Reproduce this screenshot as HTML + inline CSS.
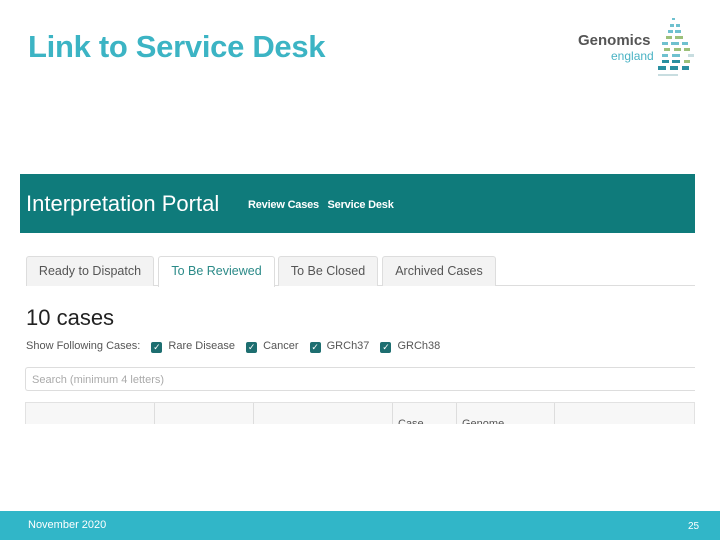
<!DOCTYPE html>
<html><head><meta charset="utf-8"><style>
*{margin:0;padding:0;box-sizing:border-box}
body{width:720px;height:540px;background:#fff;position:relative;overflow:hidden;font-family:"Liberation Sans",Arial,sans-serif}
.a{position:absolute}
.title{left:28px;top:29px;font-size:31px;font-weight:bold;color:#3cb4c4;font-family:"Liberation Sans",sans-serif;letter-spacing:-0.3px}
.hdr{left:20px;top:174px;width:675px;height:59px;background:#0f7b7b}
.tab{position:absolute;top:256px;height:30px;border:1px solid #ddd;border-bottom:none;background:#f3f3f3;border-radius:3px 3px 0 0;font-size:12.5px;color:#555;text-align:center;line-height:29px}
.cb{display:inline-block;width:11px;height:11px;background:#1d6e70;border-radius:2px;vertical-align:-1px;margin:0 6px 0 8px;color:#fff;font-size:9px;line-height:11px;text-align:center}
</style></head><body>
<div class="a title">Link to Service Desk</div>
<div class="a" style="left:578px;top:32px;font-size:15px;font-weight:bold;color:#555">Genomics</div>
<div class="a" style="left:611px;top:49px;font-size:12px;color:#4ab3c4">england</div>
<svg class="a" style="left:658px;top:16px" width="40" height="62">
<g fill="#6fc1cf"><rect x="14" y="2" width="3" height="2"/><rect x="12" y="8" width="4" height="3"/><rect x="18" y="8" width="4" height="3"/><rect x="10" y="14" width="5" height="3"/><rect x="17" y="14" width="6" height="3"/><rect x="4" y="26" width="6" height="3"/><rect x="13" y="26" width="8" height="3"/><rect x="24" y="26" width="6" height="3"/><rect x="4" y="38" width="6" height="3"/><rect x="14" y="38" width="8" height="3"/></g>
<g fill="#9cc07a"><rect x="8" y="20" width="6" height="3"/><rect x="17" y="20" width="8" height="3"/><rect x="6" y="32" width="6" height="3"/><rect x="16" y="32" width="7" height="3"/><rect x="26" y="32" width="6" height="3"/><rect x="26" y="44" width="6" height="3"/></g>
<g fill="#2a8fa0"><rect x="4" y="44" width="7" height="3"/><rect x="14" y="44" width="8" height="3"/><rect x="0" y="50" width="8" height="4"/><rect x="12" y="50" width="8" height="4"/><rect x="24" y="50" width="7" height="4"/></g>
<g fill="#c8dde0"><rect x="0" y="58" width="20" height="2"/><rect x="30" y="38" width="6" height="3"/></g>
</svg>
<div class="a hdr"></div>
<div class="a" style="left:26px;top:191px;font-size:22px;color:#fff">Interpretation Portal</div>
<div class="a" style="left:248px;top:199px;font-size:11px;color:#fff;font-weight:bold;letter-spacing:-0.2px">Review Cases &nbsp;&nbsp;Service Desk</div>
<div class="a" style="left:26px;top:285px;width:669px;height:1px;background:#ddd"></div>
<div class="tab" style="left:26px;width:128px">Ready to Dispatch</div>
<div class="tab" style="left:158px;width:117px;background:#fff;color:#2b8a88;height:31px">To Be Reviewed</div>
<div class="tab" style="left:278px;width:100px">To Be Closed</div>
<div class="tab" style="left:382px;width:114px">Archived Cases</div>
<div class="a" style="left:26px;top:305px;font-size:22px;color:#222">10 cases</div>
<div class="a" style="left:26px;top:340px;font-size:11px;color:#555;white-space:nowrap">Show Following Cases: <span class="cb">✓</span>Rare Disease <span class="cb">✓</span>Cancer <span class="cb">✓</span>GRCh37 <span class="cb">✓</span>GRCh38</div>
<div class="a" style="left:25px;top:367px;width:670px;height:24px;border:1px solid #ddd;border-right:none;border-radius:3px 0 0 3px;font-size:11px;color:#aaa;padding:6px 0 0 6px">Search (minimum 4 letters)</div>
<div class="a" style="left:25px;top:402px;width:670px;height:22px;border:1px solid #e2e2e2;border-bottom:none;background:#f7f7f7;overflow:hidden">
<div class="a" style="left:128px;top:0;width:1px;height:22px;background:#ddd"></div>
<div class="a" style="left:227px;top:0;width:1px;height:22px;background:#ddd"></div>
<div class="a" style="left:366px;top:0;width:1px;height:22px;background:#ddd"></div>
<div class="a" style="left:430px;top:0;width:1px;height:22px;background:#ddd"></div>
<div class="a" style="left:528px;top:0;width:1px;height:22px;background:#ddd"></div>
<div class="a" style="left:372px;top:15px;font-size:11px;color:#555">Case</div>
<div class="a" style="left:436px;top:15px;font-size:11px;color:#555">Genome</div>
</div>
<div class="a" style="left:0;top:511px;width:720px;height:29px;background:#31b6c8"></div>
<div class="a" style="left:28px;top:519px;font-size:11px;color:#fff">November 2020</div>
<div class="a" style="left:688px;top:521px;font-size:10px;color:#fff">25</div>
</body></html>
